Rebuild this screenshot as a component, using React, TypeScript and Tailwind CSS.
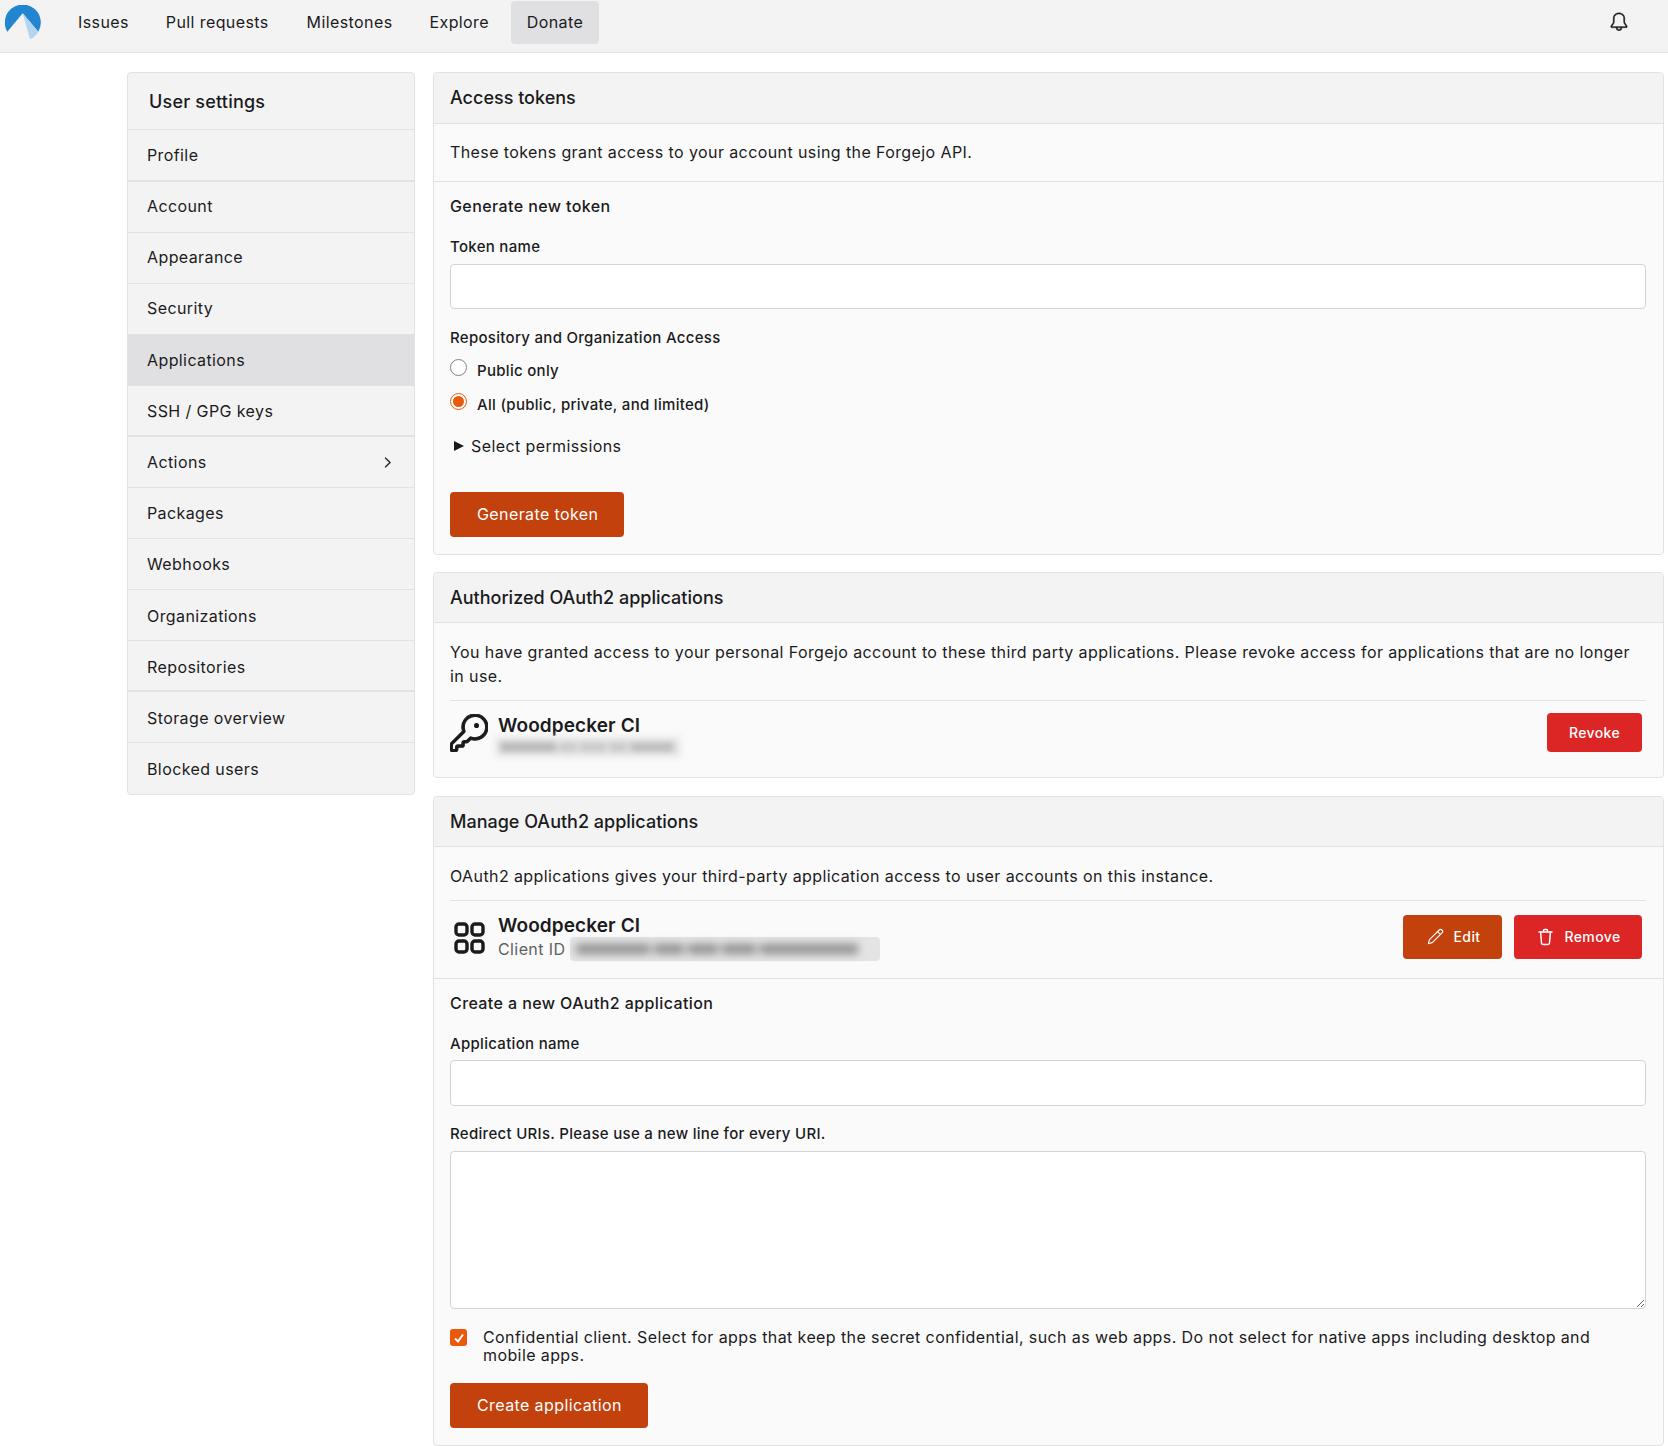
import { GoBell, GoChevronRight, GoKey } from 'react-icons/go';
import { Pencil } from 'lucide-react';

const sideItems = [
  { label: 'Profile', thick: true, tall: true },
  { label: 'Account', up: true },
  { label: 'Appearance', up: true },
  { label: 'Security', up: true },
  { label: 'Applications', active: true },
  { label: 'SSH / GPG keys', thick: true },
  { label: 'Actions', chevron: true },
  { label: 'Packages' },
  { label: 'Webhooks' },
  { label: 'Organizations', down: true },
  { label: 'Repositories', thick: true, down: true },
  { label: 'Storage overview', down: true },
  { label: 'Blocked users', last: true },
];

function Logo() {
  return (
    <svg width="36" height="36" viewBox="0 0 36 36">
      <path d="M17.7 8.3 L2.3 26.7 A18 18 0 1 1 33.3 26.7 Z" fill="#2185d0" />
      <path d="M17.7 8.3 L33.3 26.7 A18 18 0 0 1 25 34.3 Z" fill="#b5d5ef" />
    </svg>
  );
}

function AppsIcon() {
  return (
    <svg width="38" height="38" viewBox="0 0 38 38" fill="none" stroke="#1b1b1d" strokeWidth="3.4">
      <rect x="6" y="6" width="11" height="11" rx="3" />
      <rect x="22" y="6" width="11" height="11" rx="3" />
      <rect x="6" y="23" width="11" height="11" rx="3" />
      <rect x="22" y="23" width="11" height="11" rx="3" />
    </svg>
  );
}

function BinIcon() {
  return (
    <svg width="17" height="18" viewBox="0 0 17 18" fill="none" stroke="white" strokeWidth="1.5" strokeLinecap="round" strokeLinejoin="round">
      <path d="M6.5 3.5 V2.6 a1 1 0 0 1 1 -1 h2 a1 1 0 0 1 1 1 V3.5" />
      <path d="M2 4 H15" />
      <path d="M3.6 4 L4.5 15 a1.5 1.5 0 0 0 1.5 1.4 h5 a1.5 1.5 0 0 0 1.5 -1.4 L13.4 4" />
    </svg>
  );
}

function CardHeader({ children, short, low }: { children: React.ReactNode; short?: boolean; low?: boolean }) {
  return (
    <div className={`${short ? 'h-[50px]' : 'h-[51px]'} ${low ? 'pb-[1px]' : 'pb-[2px]'} flex items-center px-4 text-[18px] font-medium tracking-normal bg-[#f3f3f3] border-b border-[#e2e2e5] rounded-t-[4px]`}>
      {children}
    </div>
  );
}

function PrimaryButton({ children }: { children: React.ReactNode }) {
  return (
    <button className="h-[45px] pl-[27px] pr-[26px] pb-[1px] rounded-[4px] bg-[#c2410c] text-white text-[16px]">{children}</button>
  );
}

export default function App() {
  return (
    <div className="min-h-[1446px] bg-white text-[#1b1b1d] text-[16px] tracking-[0.4px] font-['Inter',sans-serif]">
      <nav className="h-[53px] flex items-start bg-[#f3f3f3] border-b border-[#e2e2e5]">
        <div className="ml-[5px] mt-[5px] w-[36px] h-[36px]"><Logo /></div>
        <div className="ml-[21px] flex items-center gap-[6px] mt-[1px]">
          {['Issues', 'Pull requests', 'Milestones', 'Explore'].map((n) => (
            <a key={n} className={`h-[43px] flex items-center px-4 pb-[2px] ${n === 'Issues' || n === 'Milestones' ? '-mr-[1px]' : ''}`}>{n}</a>
          ))}
          <a className="h-[43px] w-[88px] flex items-center justify-center pb-[2px] bg-[#e0e0e3] rounded-[4px]">Donate</a>
        </div>
        <div className="ml-auto mr-[39px] mt-[12px]"><GoBell size={20} className="stroke-current stroke-[0.4px]" /></div>
      </nav>

      <div className="flex items-start gap-[18px] pl-[127px] pr-[4px] pt-[19px]">
        <aside className="w-[288px] shrink-0 bg-[#f3f3f3] border border-[#e2e2e5] rounded-[4px]">
          <div className="h-[57px] flex items-center pl-[21px] text-[18px] font-medium tracking-[0.2px] border-b border-[#e2e2e5]">User settings</div>
          {sideItems.map((s) => (
            <div
              key={s.label}
              className={`${s.tall ? 'h-[52px]' : 'h-[51px]'} flex items-center justify-between pl-[19px] pr-[18px] ${s.up ? 'pb-[2px]' : ''} ${s.down ? 'pt-[2px]' : ''} ${s.last ? '' : s.thick ? 'border-b-2 border-[#e2e2e5]' : 'border-b border-[#e2e2e5]'} ${s.active ? 'bg-[#e0e0e3]' : ''}`}
            >
              {s.label}
              {s.chevron && <GoChevronRight size={17} className="stroke-current stroke-[0.5px]" />}
            </div>
          ))}
        </aside>

        <main className="flex-1 min-w-0 flex flex-col gap-[18px]">
          <section className="bg-[#fafafa] border border-[#e2e2e5] rounded-[4px]">
            <CardHeader>Access tokens</CardHeader>
            <div className="h-[58px] flex items-center pl-4 pr-[17px] pb-[2px] border-b border-[#e2e2e5]">These tokens grant access to your account using the Forgejo API.</div>
            <div className="pl-4 pr-[17px] pt-[13px] pb-[17px]">
              <div className="font-medium leading-[22px]">Generate new token</div>
              <label className="block mt-[19px] text-[15px] font-medium leading-[22px] tracking-[0.3px]">Token name</label>
              <div className="mt-[6px] h-[45px] bg-white border border-[#d4d4d8] rounded-[4px]" />
              <div className="mt-[18px] text-[15px] font-medium leading-[22px] tracking-[0.3px]">Repository and Organization Access</div>
              <div className="mt-[11px] flex items-center gap-[10px] font-medium text-[15px] leading-[22px] tracking-[0.3px]">
                <span className="w-[17px] h-[17px] rounded-full border border-[#808080] bg-white -mt-[8px]" />
                Public only
              </div>
              <div className="mt-[12px] flex items-center gap-[10px] font-medium text-[15px] leading-[22px] tracking-[0.3px]">
                <span className="w-[17px] h-[17px] rounded-full border border-[#ea580c] bg-white flex items-center justify-center -mt-[8px]">
                  <span className="w-[11px] h-[11px] rounded-full bg-[#ea580c]" />
                </span>
                All (public, private, and limited)
              </div>
              <div className="mt-[19px] flex items-center gap-[7px] ml-[4px] leading-[22px]">
                <span className="w-0 h-0 border-y-[5px] border-y-transparent border-l-[10px] border-l-[#1b1b1d]" />
                Select permissions
              </div>
              <div className="mt-[35px]"><PrimaryButton>Generate token</PrimaryButton></div>
            </div>
          </section>

          <section className="-mt-[1px] bg-[#fafafa] border border-[#e2e2e5] rounded-[4px]">
            <CardHeader short low>Authorized OAuth2 applications</CardHeader>
            <div className="pl-4 pr-[17px] pt-[17px]">
              <p className="leading-[24px] pb-[12px] pr-[8px] border-b border-[#e2e2e5]">You have granted access to your personal Forgejo account to these third party applications. Please revoke access for applications that are no longer in use.</p>
              <div className="flex items-center h-[76px] pb-[12px]">
                <GoKey size={38} className="stroke-current stroke-[0.7px]" />
                <div className="ml-[10px] mt-[4px]">
                  <div className="text-[19px] font-semibold tracking-[0.1px] leading-[23px]">Woodpecker CI</div>
                  <div className="h-[20px] w-[186px] -ml-[3px] blur-[3px] bg-[#e8e8e8] flex items-center gap-[3px] px-[5px]">
                    <span className="h-[10px] w-[56px] bg-[#b8b8b8]" />
                    <span className="h-[10px] w-[18px] bg-[#cacaca]" />
                    <span className="h-[10px] w-[26px] bg-[#cacaca]" />
                    <span className="h-[10px] w-[18px] bg-[#cacaca]" />
                    <span className="h-[10px] w-[44px] bg-[#bebebe]" />
                  </div>
                </div>
                <button className="ml-auto mr-[4px] mb-[2px] h-[39px] w-[95px] rounded-[4px] bg-[#dc2626] text-white text-[14px] font-medium">Revoke</button>
              </div>
            </div>
          </section>

          <section className="bg-[#fafafa] border border-[#e2e2e5] rounded-[4px]">
            <CardHeader short low>Manage OAuth2 applications</CardHeader>
            <div className="pl-4 pr-[17px] pt-[17px]">
              <p className="leading-[24px] pb-[12px] border-b border-[#e2e2e5]">OAuth2 applications gives your third-party application access to user accounts on this instance.</p>
              <div className="flex items-center h-[77px] pb-[6px]">
                <AppsIcon />
                <div className="ml-[10px] mt-[2px]">
                  <div className="text-[19px] font-semibold tracking-[0.1px] leading-[23px]">Woodpecker CI</div>
                  <div className="flex items-center text-[#616161] leading-[24px]">
                    Client ID
                    <div className="ml-[5px] h-[24px] w-[310px] rounded-[4px] bg-[#e4e4e4] flex items-center">
                      <div className="w-full blur-[4px] flex items-center gap-[4px] px-[6px]">
                        <span className="h-[10px] w-[74px] bg-[#8f8f8f]" />
                        <span className="h-[10px] w-[30px] bg-[#8f8f8f]" />
                        <span className="h-[10px] w-[30px] bg-[#8f8f8f]" />
                        <span className="h-[10px] w-[34px] bg-[#8f8f8f]" />
                        <span className="h-[10px] w-[98px] bg-[#8f8f8f]" />
                      </div>
                    </div>
                  </div>
                </div>
                <div className="ml-auto mr-[4px] flex gap-[12px]">
                  <button className="h-[44px] w-[99px] pl-[2px] rounded-[4px] bg-[#c2410c] text-white text-[14px] font-medium flex items-center justify-center gap-[10px]"><Pencil size={17} strokeWidth={1.6} />Edit</button>
                  <button className="h-[44px] w-[128px] pl-[2px] rounded-[4px] bg-[#dc2626] text-white text-[14px] font-medium flex items-center justify-center gap-[10px]"><BinIcon />Remove</button>
                </div>
              </div>
            </div>
            <div className="pl-4 pr-[17px] pt-[13px] pb-[17px] border-t border-[#e2e2e5]">
              <div className="font-medium leading-[22px]">Create a new OAuth2 application</div>
              <label className="block mt-[19px] text-[15px] font-medium leading-[22px] tracking-[0.3px]">Application name</label>
              <div className="mt-[5px] h-[46px] bg-white border border-[#d4d4d8] rounded-[4px]" />
              <label className="block mt-[17px] text-[15px] font-medium leading-[22px] tracking-[0.3px]">Redirect URIs. Please use a new line for every URI.</label>
              <textarea className="block mt-[6px] w-full h-[158px] bg-white border border-[#d4d4d8] rounded-[4px]" />
              <div className="mt-[19px] flex items-start gap-[16px]">
                <span className="mt-[1px] w-[17px] h-[17px] shrink-0 rounded-[3px] bg-[#ea580c] flex items-center justify-center">
                  <svg width="12" height="12" viewBox="0 0 12 12" fill="none"><path d="M2 6.5 L5 9.5 L10 2.5" stroke="white" strokeWidth="2" /></svg>
                </span>
                <p className="leading-[18px] pr-[8px]">Confidential client. Select for apps that keep the secret confidential, such as web apps. Do not select for native apps including desktop and mobile apps.</p>
              </div>
              <div className="mt-[19px]"><PrimaryButton>Create application</PrimaryButton></div>
            </div>
          </section>
        </main>
      </div>
    </div>
  );
}
